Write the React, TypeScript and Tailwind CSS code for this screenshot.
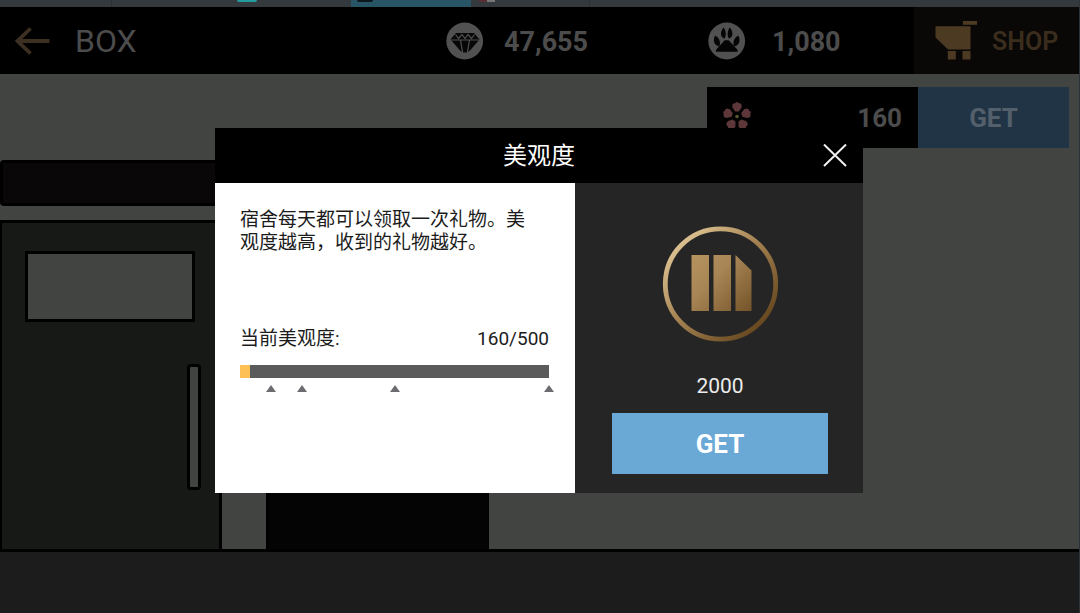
import React from "react";

function BackArrow() {
  return (
    <svg width="36" height="28" viewBox="0 0 36 28" fill="none" stroke="#3d2f21" strokeWidth="3.8" aria-hidden="true">
      <path d="M2 14H34.5M15.5 1.5L2.5 14L15.5 26.5" />
    </svg>
  );
}

function DiamondIcon() {
  return (
    <svg width="38" height="38" viewBox="0 0 38 38" aria-hidden="true">
      <circle cx="18.7" cy="19" r="18.4" fill="#515151" />
      <path d="M10 11H28L33.5 17.5L23.5 29L20.5 30.5H17.5L14.5 29L4.5 17.5Z" fill="#070707" />
      <path
        d="M5 18H33M9.5 12.5L12.5 16.5L16 12.5L19 16.5L22 12.5L25.5 16.5L28.5 12.5M14.5 18L16.5 30M23.5 18L21.5 30"
        fill="none"
        stroke="#515151"
        strokeWidth="1.2"
      />
    </svg>
  );
}

function PawIcon() {
  return (
    <svg width="38" height="38" viewBox="0 0 38 38" aria-hidden="true">
      <circle cx="18.7" cy="19" r="18.4" fill="#515151" />
      <g fill="#050505">
        <path d="M15.6 5.5C18.2 9 18.3 13.5 16.6 16.5C12.6 15.5 11.4 10.5 15.6 5.5Z" />
        <path d="M21.8 5.5C19.2 9 19.1 13.5 20.8 16.5C24.8 15.5 26 10.5 21.8 5.5Z" />
        <path d="M7.1 13.4C11.3 15.7 13 20 11.4 24.3C6.8 24 4.2 19 7.1 13.4Z" />
        <path d="M30.3 13.4C26.1 15.7 24.4 20 26 24.3C30.6 24 33.2 19 30.3 13.4Z" />
        <path d="M16.7 18.2H20.7L29.5 27.8V29.8H8V27.8Z" />
      </g>
    </svg>
  );
}

function CartIcon() {
  return (
    <svg width="42" height="39" viewBox="0 0 42 39" fill="#4c3a22" aria-hidden="true">
      <path d="M28 0H42V3.8H28Z" />
      <path d="M0.5 5.3H35.5V28.6H13L0.5 16.5Z" />
      <path d="M12.8 30H20.8V38.5H12.8ZM27.5 30H35.5V38.5H27.5Z" />
    </svg>
  );
}

const petalAngles = [0, 72, 144, 216, 288];

function FlowerIcon() {
  return (
    <svg width="32" height="32" viewBox="-16 -14.5 32 32" aria-hidden="true">
      {petalAngles.map((angle) => (
        <path
          key={angle}
          d="M-1.8 -5L-4.6 -9V-12L-2.6 -13.6L-1.6 -13.2L0 -15L1.6 -13.2L2.6 -13.6L4.6 -12V-9L1.8 -5Z"
          fill="#5d373a"
          transform={`rotate(${angle})`}
        />
      ))}
      <circle r="1.8" fill="#58592c" />
    </svg>
  );
}

function Emblem() {
  return (
    <svg width="116" height="116" viewBox="0 0 116 116" aria-hidden="true">
      <defs>
        <linearGradient id="ring" x1="0.1" y1="0.15" x2="0.85" y2="0.9">
          <stop offset="0" stopColor="#dcc190" />
          <stop offset="0.45" stopColor="#a58353" />
          <stop offset="1" stopColor="#67481f" />
        </linearGradient>
        <linearGradient id="bars" gradientUnits="userSpaceOnUse" x1="30" y1="28" x2="88" y2="86">
          <stop offset="0" stopColor="#b6945f" />
          <stop offset="0.4" stopColor="#a88555" />
          <stop offset="1" stopColor="#745429" />
        </linearGradient>
      </defs>
      <circle cx="58.5" cy="58" r="55.2" fill="none" stroke="url(#ring)" strokeWidth="4.8" />
      <path d="M29.5 29H47V85H29.5ZM51.5 29H69V85H51.5ZM73.5 29L89.5 44.5V85H73.5Z" fill="url(#bars)" />
    </svg>
  );
}

function BrowserStrip() {
  return (
    <div className="flex h-[7px] shrink-0 overflow-hidden bg-[#33393d]" aria-hidden="true">
      <div className="w-28 border-r border-[#2a3034]" />
      <div className="flex w-[239px] justify-end pr-[94px]">
        <div className="h-0.5 w-5 rounded-b-sm bg-[#239a9c]" />
      </div>
      <div className="w-[120px] bg-[#285566] pl-1.5">
        <div className="h-0.5 w-4 rounded-b-sm bg-[#0c171c]" />
      </div>
      <div className="flex w-[119px] border-r border-[#2a3034] pl-2">
        <div className="h-0.5 w-2 bg-[#592f35]" />
        <div className="h-0.5 w-2 bg-[#777777]" />
      </div>
    </div>
  );
}

function TopBar() {
  return (
    <header className="grid h-[67px] shrink-0 grid-cols-[446fr_262fr_206fr_165px] items-center bg-black font-bold text-[#4c4c4c]">
      <div className="flex items-center gap-6 pl-[15px]">
        <button type="button" aria-label="Back">
          <BackArrow />
        </button>
        <h1 className="text-[32px] leading-10 font-normal">BOX</h1>
      </div>
      <div className="flex items-center gap-5">
        <DiamondIcon />
        <span className="pt-0.5 text-[27px] leading-8">47,655</span>
      </div>
      <div className="flex items-center gap-[26px]">
        <PawIcon />
        <span className="pt-0.5 text-[27px] leading-8">1,080</span>
      </div>
      <button type="button" className="flex h-full items-center gap-[15px] bg-[#090807] pl-[21px] text-[25px] leading-8 font-semibold text-[#3b2d1d]">
        <CartIcon />
        <span className="pt-0.5">SHOP</span>
      </button>
    </header>
  );
}

function Balance() {
  return (
    <div className="absolute top-[13px] right-2.5 flex h-[61px] text-[26px] leading-8 font-bold text-[#4c4c4c]">
      <div className="flex w-[211px] items-center justify-between bg-black pr-4 pl-3.5">
        <FlowerIcon />
        <span>160</span>
      </div>
      <button type="button" className="w-[151px] bg-[#213445] text-[#53606b]">
        GET
      </button>
    </div>
  );
}

function Room() {
  return (
    <main className="relative flex flex-1 flex-col bg-[#424442]">
      <div className="flex flex-1 items-end gap-11" aria-hidden="true">
        <div className="flex w-[222px] flex-col gap-3.5">
          <div className="h-[46px] rounded-sm border-[3px] border-black bg-[#0a0708]" />
          <div className="flex flex-col border-[3px] border-b-0 border-l-2 border-black bg-[#171917] pt-7 pr-[18px] pb-[59px] pl-[23px]">
            <div className="h-[71px] w-[170px] border-[3px] border-black bg-[#424442]" />
            <div className="mt-[42px] h-[126px] w-3.5 self-end rounded-sm border-[3px] border-black bg-[#424442]" />
          </div>
        </div>
        <div className="h-40 w-[223px] border-l-[3px] border-black bg-[#040404]" />
      </div>
      <div className="h-16 border-t-[3px] border-black bg-[#1c1c1c]" aria-hidden="true" />
      <Balance />
    </main>
  );
}

function Marker({ place }: { place: string }) {
  return (
    <svg className={`absolute top-0 -translate-x-1/2 ${place}`} width="10" height="7" viewBox="0 0 10 7" aria-hidden="true">
      <path d="M5 0L10 7H0Z" fill="#6c6c70" />
    </svg>
  );
}

function GiftDialog() {
  return (
    <div className="fixed inset-0 flex items-center justify-center pt-2 pr-0.5">
      <section role="dialog" aria-labelledby="dialog-title" className="w-full max-w-[648px]">
        <div className="grid h-[55px] grid-cols-[1fr_auto_1fr] items-center bg-black text-white">
          <h2 id="dialog-title" className="col-start-2 text-2xl font-normal">
            美观度
          </h2>
          <button type="button" aria-label="关闭" className="mr-4 justify-self-end">
            <svg width="24" height="24" viewBox="0 0 24 24" fill="none" stroke="#f2f2f2" strokeWidth="2" aria-hidden="true">
              <path d="M1 0.5L23 22M23 0.5L1 22" />
            </svg>
          </button>
        </div>
        <div className="grid grid-cols-[5fr_4fr]">
          <div className="bg-white pt-[25px] pr-[26px] pl-[25px] text-[19px] leading-[23px] text-[#1c1c1c]">
            <p className="pr-4">宿舍每天都可以领取一次礼物。美观度越高，收到的礼物越好。</p>
            <div className="mt-[73px] flex justify-between">
              <span id="beauty-label">当前美观度:</span>
              <span>160/500</span>
            </div>
            <div
              role="progressbar"
              aria-labelledby="beauty-label"
              aria-valuenow={160}
              aria-valuemax={500}
              className="mt-[15px] h-[13px] bg-[#5b5b5b]"
            >
              <div className="h-full w-2.5 bg-[#fdc054]" />
            </div>
            <div className="relative mt-[7px] h-[7px]">
              <Marker place="left-[10%]" />
              <Marker place="left-[20%]" />
              <Marker place="left-1/2" />
              <Marker place="left-full" />
            </div>
          </div>
          <div className="flex flex-col items-center bg-[#252525] pt-[43px] pr-[35px] pb-[19px] pl-[37px]">
            <Emblem />
            <p className="mt-7 text-[21px] leading-8 text-[#ececec]">2000</p>
            <button type="button" className="mt-[11px] h-[61px] w-full bg-[#6aa9d6] text-[26px] leading-8 font-bold text-white">
              GET
            </button>
          </div>
        </div>
      </section>
    </div>
  );
}

export default function App() {
  return (
    <div
      lang="zh-CN"
      className="flex min-h-screen flex-col border-r border-[#2b3338] bg-[#1c1c1c] font-['Roboto','Noto_Sans_CJK_SC',sans-serif]"
    >
      <BrowserStrip />
      <TopBar />
      <Room />
      <GiftDialog />
    </div>
  );
}
